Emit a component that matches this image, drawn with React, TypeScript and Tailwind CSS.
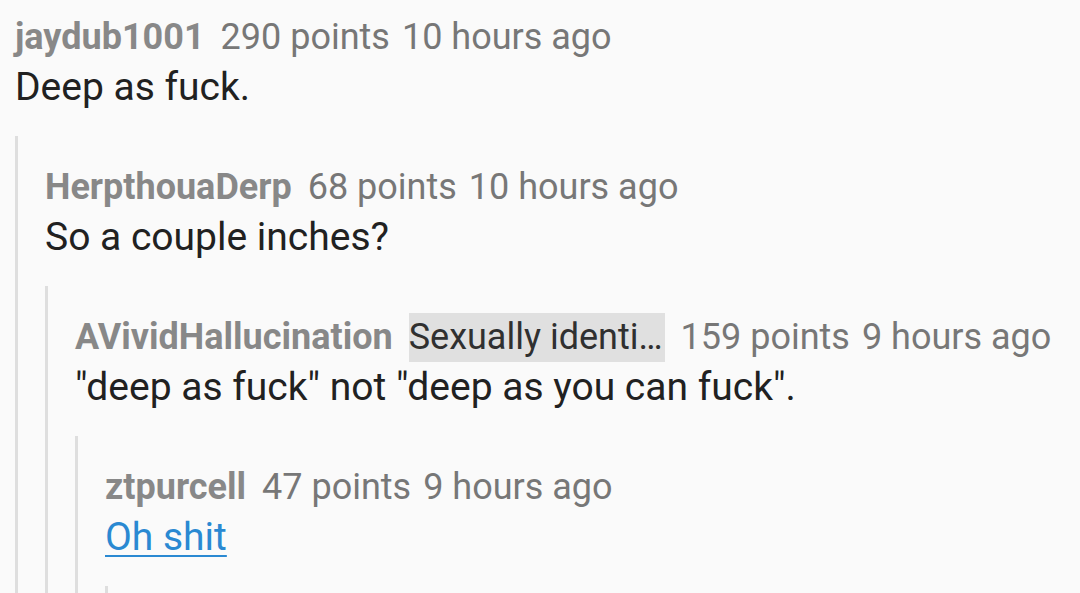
import React from 'react';

type Comment = {
  author: string;
  flair?: string;
  points: number;
  time: string;
  body: string;
  link?: boolean;
  replies?: Comment[];
};

const thread: Comment = {
  author: 'jaydub1001',
  points: 290,
  time: '10 hours ago',
  body: 'Deep as fuck.',
  replies: [
    {
      author: 'HerpthouaDerp',
      points: 68,
      time: '10 hours ago',
      body: 'So a couple inches?',
      replies: [
        {
          author: 'AVividHallucination',
          flair: 'Sexually identi…',
          points: 159,
          time: '9 hours ago',
          body: '"deep as fuck" not "deep as you can fuck".',
          replies: [
            {
              author: 'ztpurcell',
              points: 47,
              time: '9 hours ago',
              body: 'Oh shit',
              link: true,
              replies: [],
            },
          ],
        },
      ],
    },
  ],
};

const CommentNode: React.FC<{ c: Comment }> = ({ c }) => (
  <div>
    <div className="flex items-center h-[50px] whitespace-nowrap text-[36px] text-[#777777]">
      <span className="font-bold text-[#888888]">{c.author}</span>
      {c.flair && (
        <span className="ml-4 bg-[#e0e0e0] text-[#303030] leading-[49px] pr-[2px]">{c.flair}</span>
      )}
      <span className="ml-4">{c.points} points</span>
      <span className="ml-3">{c.time}</span>
    </div>
    <div className="h-[50px] flex items-center whitespace-nowrap text-[39px]">
      {c.link ? (
        <a href="#" className="text-[#2a89d2] underline decoration-2 underline-offset-[5px]">
          {c.body}
        </a>
      ) : (
        <span className="text-[#212121]">{c.body}</span>
      )}
    </div>
    {c.replies && (
      <div className="mt-[24px] border-l-[3px] border-[#dedede] pl-[27px] pt-[26px] min-h-[200px]">
        {c.replies.map((r) => (
          <CommentNode key={r.author} c={r} />
        ))}
      </div>
    )}
  </div>
);

const App: React.FC = () => {
  return (
    <div className="w-[1080px] h-[593px] overflow-hidden bg-[#fafafa] font-['Roboto',sans-serif]">
      <div className="pl-[15px] pt-[12px]">
        <CommentNode c={thread} />
      </div>
    </div>
  );
};

export default App;
